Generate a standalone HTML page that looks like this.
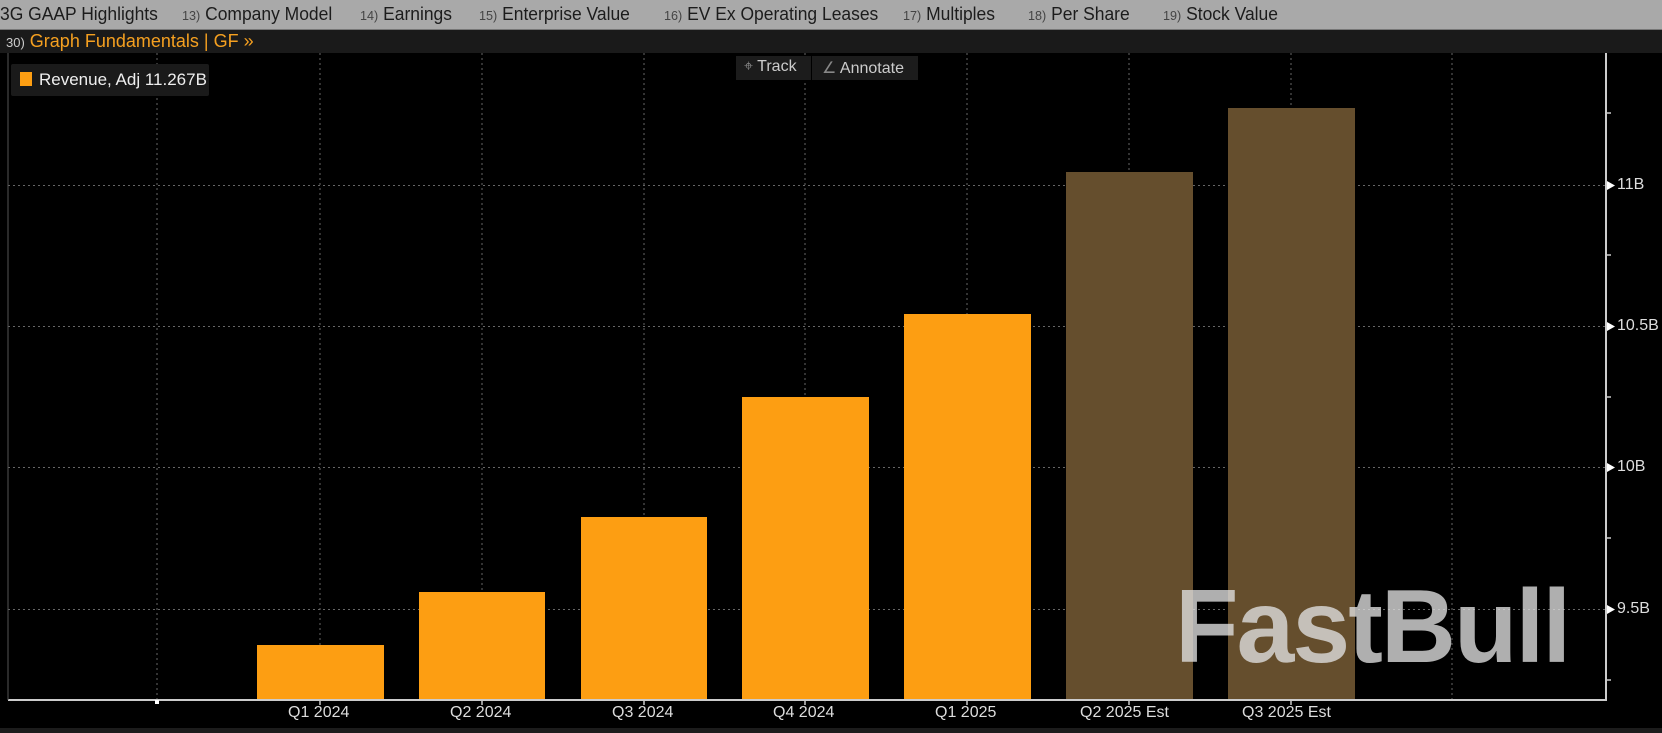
<!DOCTYPE html>
<html><head><meta charset="utf-8"><style>
html,body{margin:0;padding:0;background:#000;width:1662px;height:733px;overflow:hidden;font-family:"Liberation Sans",sans-serif}
.top{position:absolute;left:0;top:0;width:1662px;height:29px;background:#a9a9a9;border-bottom:1px solid #777}
.tab{position:absolute;top:4px;font-size:18px;color:#1c1c1c;white-space:nowrap;transform:scaleX(0.97);transform-origin:left}
.tab small{font-size:13px;color:#444}
.bar2{position:absolute;left:0;top:30px;width:1662px;height:23px;background:#1a1a1a}
.gf{position:absolute;left:6px;top:31px;font-size:18px;color:#f5a020;transform:scaleX(1.0);transform-origin:left;white-space:nowrap}
.gf small{font-size:13px;color:#ccc}
.lbl{position:absolute;font-size:16px;color:#ddd;white-space:nowrap}
</style></head><body>
<div class="top">
<div class="tab" style="left:0">3G GAAP Highlights</div>
<div class="tab" style="left:182px"><small>13)</small> Company Model</div>
<div class="tab" style="left:360px"><small>14)</small> Earnings</div>
<div class="tab" style="left:479px"><small>15)</small> Enterprise Value</div>
<div class="tab" style="left:664px"><small>16)</small> EV Ex Operating Leases</div>
<div class="tab" style="left:903px"><small>17)</small> Multiples</div>
<div class="tab" style="left:1028px"><small>18)</small> Per Share</div>
<div class="tab" style="left:1163px"><small>19)</small> Stock Value</div>
</div>
<div class="bar2"></div>
<div class="gf"><small>30)</small> Graph Fundamentals | GF »</div>

<svg width="1662" height="733" style="position:absolute;left:0;top:0" xmlns="http://www.w3.org/2000/svg">
<g stroke="#666" stroke-dasharray="2,3" stroke-width="1">
<line x1="157" y1="53" x2="157" y2="700"/><line x1="320" y1="53" x2="320" y2="700"/><line x1="482" y1="53" x2="482" y2="700"/><line x1="644" y1="53" x2="644" y2="700"/><line x1="805" y1="53" x2="805" y2="700"/><line x1="967" y1="53" x2="967" y2="700"/><line x1="1129" y1="53" x2="1129" y2="700"/><line x1="1291" y1="53" x2="1291" y2="700"/><line x1="1452" y1="53" x2="1452" y2="700"/>
<line x1="8" y1="185.5" x2="1606" y2="185.5"/><line x1="8" y1="326.5" x2="1606" y2="326.5"/><line x1="8" y1="467.5" x2="1606" y2="467.5"/><line x1="8" y1="609.5" x2="1606" y2="609.5"/>
</g>
<g fill="#fd9e12">
<rect x="257" y="645" width="127" height="55"/>
<rect x="419" y="592" width="126" height="108"/>
<rect x="581" y="517" width="126" height="183"/>
<rect x="742" y="397" width="127" height="303"/>
<rect x="904" y="314" width="127" height="386"/>
</g>
<g fill="#654e2d">
<rect x="1066" y="172" width="127" height="528"/>
<rect x="1228" y="108" width="127" height="592"/>
</g>
<text x="1175" y="662" font-family="Liberation Sans,sans-serif" font-weight="bold" font-size="104" fill="#e0e0e0" fill-opacity="0.78" letter-spacing="-2">FastBull</text>
<g stroke="#ccc" stroke-width="2" fill="none">
<line x1="8" y1="700" x2="1607" y2="700"/><line x1="1606" y1="53" x2="1606" y2="700"/>
</g>
<line x1="8" y1="53" x2="8" y2="700" stroke="#555"/>
<rect x="155" y="700" width="4" height="4" fill="#fff"/>
<g stroke="#ccc" stroke-width="1.5">
<line x1="320" y1="700" x2="320" y2="705"/><line x1="482" y1="700" x2="482" y2="705"/><line x1="644" y1="700" x2="644" y2="705"/><line x1="805" y1="700" x2="805" y2="705"/><line x1="967" y1="700" x2="967" y2="705"/><line x1="1129" y1="700" x2="1129" y2="705"/><line x1="1291" y1="700" x2="1291" y2="705"/>
<line x1="1606" y1="113" x2="1611" y2="113"/><line x1="1606" y1="255" x2="1611" y2="255"/><line x1="1606" y1="397" x2="1611" y2="397"/><line x1="1606" y1="538" x2="1611" y2="538"/><line x1="1606" y1="680" x2="1611" y2="680"/>
</g>
<g fill="#fff">
<polygon points="1607,181 1615,185.5 1607,190"/><polygon points="1607,322 1615,326.5 1607,331"/><polygon points="1607,463 1615,467.5 1607,472"/><polygon points="1607,605 1615,609.5 1607,614"/>
</g>
<rect x="0" y="728" width="1662" height="5" fill="#1c1c1c"/>
</svg>
<div class="lbl" style="left:1617px;top:176px">11B</div>
<div class="lbl" style="left:1617px;top:317px">10.5B</div>
<div class="lbl" style="left:1617px;top:458px">10B</div>
<div class="lbl" style="left:1617px;top:600px">9.5B</div>
<div class="lbl" style="left:288px;top:704px">Q1 2024</div>
<div class="lbl" style="left:450px;top:704px">Q2 2024</div>
<div class="lbl" style="left:612px;top:704px">Q3 2024</div>
<div class="lbl" style="left:773px;top:704px">Q4 2024</div>
<div class="lbl" style="left:935px;top:704px">Q1 2025</div>
<div class="lbl" style="left:1080px;top:704px">Q2 2025 Est</div>
<div class="lbl" style="left:1242px;top:704px">Q3 2025 Est</div>
<div style="position:absolute;left:11px;top:64px;width:198px;height:32px;background:#1a1a1a;border-radius:2px"></div>
<div style="position:absolute;left:20px;top:72px;width:12px;height:14px;background:#fd9e12"></div>
<div class="lbl" style="left:39px;top:70px;font-size:17px;color:#eee">Revenue, Adj 11.267B</div>
<div style="position:absolute;left:736px;top:56px;width:182px;height:24px;background:#1c1c1c"></div>
<div style="position:absolute;left:811px;top:56px;width:1px;height:24px;background:#000"></div>
<div class="lbl" style="left:744px;top:58px;color:#ccc"><span style="color:#888">⌖</span> Track</div>
<div class="lbl" style="left:822px;top:58px;color:#ccc"><span style="color:#888">∠</span> Annotate</div>
</body></html>
